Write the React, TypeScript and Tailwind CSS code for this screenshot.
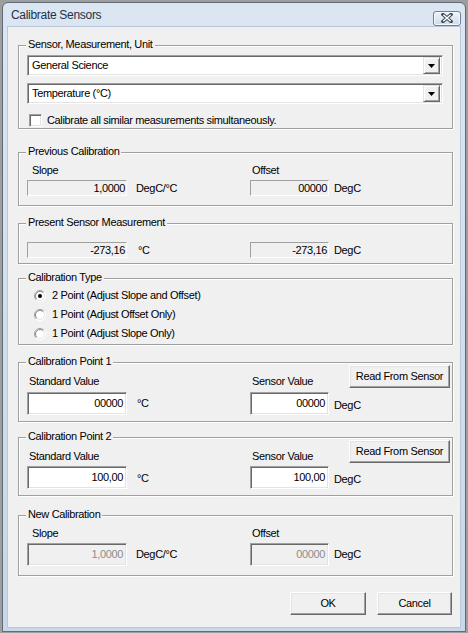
import React from "react";

const font = "font-['Liberation_Sans',Arial,sans-serif] text-[11px] leading-[13px] tracking-[-0.35px] text-black";

function Group({ title, className, children }: { title: string; className: string; children: React.ReactNode }) {
  return (
    <div className={`relative box-border w-[435px] border border-[#a0a0a0] shadow-[inset_1px_1px_0_#fff,1px_1px_0_#fff] ${className}`}>
      <span className="absolute left-[7px] top-[-8px] bg-[#f0f0f0] px-[2px] leading-[13px]">{title}</span>
      {children}
    </div>
  );
}

// classic sunken 2px edge
function Edit({ value, w, disabled }: { value: string; w: string; disabled?: boolean }) {
  return (
    <div
      className={`box-border h-[23px] ${w} flex items-center justify-end border border-t-[#a0a0a0] border-l-[#a0a0a0] border-b-white border-r-white shadow-[inset_1px_1px_0_#696969,inset_-1px_-1px_0_#e3e3e3] pr-[3px] ${
        disabled ? "bg-[#f0f0f0] text-[#8d8d8d]" : "bg-white"
      }`}
    >
      {value}
    </div>
  );
}

// static edge read-only field
function Static({ value, w }: { value: string; w: string }) {
  return (
    <div className={`box-border h-[16px] ${w} flex items-center justify-end border border-t-[#a0a0a0] border-l-[#a0a0a0] border-b-white border-r-white pr-[1px]`}>
      {value}
    </div>
  );
}

function Button({ label, className }: { label: string; className: string }) {
  return (
    <div
      className={`box-border h-[23px] flex items-center justify-center border border-t-white border-l-white border-b-[#696969] border-r-[#696969] shadow-[inset_-1px_-1px_0_#a0a0a0,inset_1px_1px_0_#e3e3e3] bg-[#f0f0f0] ${className}`}
    >
      {label}
    </div>
  );
}

function Combo({ value }: { value: string }) {
  return (
    <div className="box-border ml-[8px] h-[21px] w-[416px] flex items-center border border-t-[#a0a0a0] border-l-[#a0a0a0] border-b-white border-r-white shadow-[inset_1px_1px_0_#696969,inset_-1px_-1px_0_#e3e3e3] bg-white pl-[4px] pr-[2px]">
      <span className="flex-1">{value}</span>
      <div className="box-border h-[17px] w-[17px] flex items-center justify-center border border-t-[#e3e3e3] border-l-[#e3e3e3] border-b-[#696969] border-r-[#696969] shadow-[inset_1px_1px_0_#fff,inset_-1px_-1px_0_#a0a0a0] bg-[#f0f0f0]">
        <svg width="7" height="4" viewBox="0 0 7 4">
          <path d="M0 0H7L3.5 4Z" fill="#000" />
        </svg>
      </div>
    </div>
  );
}

function Radio({ checked, label }: { checked?: boolean; label: string }) {
  return (
    <div className="flex h-[19px] items-center pl-[15px]">
      <svg width="12" height="12" viewBox="0 0 12 12">
        <circle cx="6" cy="6" r="5.5" fill="#fff" />
        <path d="M9.9 2.1A5.5 5.5 0 0 0 2.1 9.9" fill="none" stroke="#a0a0a0" strokeWidth="1" />
        <path d="M2.1 9.9A5.5 5.5 0 0 0 9.9 2.1" fill="none" stroke="#fff" strokeWidth="1" />
        <path d="M9.2 2.8A4.5 4.5 0 0 0 2.8 9.2" fill="none" stroke="#8a8a8a" strokeWidth="1" />
        <path d="M2.8 9.2A4.5 4.5 0 0 0 9.2 2.8" fill="none" stroke="#e3e3e3" strokeWidth="1" />
        {checked && <circle cx="6" cy="6" r="2" fill="#000" />}
      </svg>
      <span className="ml-[6px]">{label}</span>
    </div>
  );
}

export default function App() {
  return (
    <div className={`w-[468px] h-[633px] bg-[#9e9e9e] pt-[2px] px-[2px] ${font}`}>
      <div className="box-border h-[630px] rounded-t-[6px] border border-[#5f6b78] bg-gradient-to-b from-[#dbe6f2] to-[#c8d7e9] px-[5px] pb-[5px]">
        {/* title bar */}
        <div className="flex h-[24px] items-center">
          <span className="ml-[3px] mt-[1px] font-['Liberation_Sans',sans-serif] text-[12px] tracking-[-0.3px] text-[#1e3148]">
            Calibrate Sensors
          </span>
          <div className="ml-auto mr-[-1px] mt-[6px] flex h-[15px] w-[28px] items-center justify-center rounded-[3px] border border-[#6e7f95] bg-gradient-to-b from-[#eef3f9] to-[#cfdbe9] shadow-[inset_0_0_0_1px_#f5f8fc]">
            <svg width="12" height="10" viewBox="0 0 12 10">
              <path d="M2 1.5L10 8.5M10 1.5L2 8.5" stroke="#3c4856" strokeWidth="3.4" strokeLinecap="square" />
              <path d="M2.3 1.8L9.7 8.2M9.7 1.8L2.3 8.2" stroke="#fff" strokeWidth="1.5" />
            </svg>
          </div>
        </div>

        {/* client area */}
        <div className="box-border h-[600px] bg-[#f0f0f0] pl-[10px] shadow-[0_0_0_1px_#b9c8d9]">
          <div className="pt-[18px]" />
          <Group title="Sensor, Measurement, Unit" className="h-[84px] pt-[9px]">
            <Combo value="General Science" />
            <div className="h-[7px]" />
            <Combo value="Temperature (°C)" />
            <div className="mt-[10px] flex items-center pl-[10px]">
              <div className="box-border h-[13px] w-[13px] border border-t-[#a0a0a0] border-l-[#a0a0a0] border-b-white border-r-white shadow-[inset_1px_1px_0_#696969,inset_-1px_-1px_0_#e3e3e3] bg-white" />
              <span className="ml-[5px]">Calibrate all similar measurements simultaneously.</span>
            </div>
          </Group>

          <Group title="Previous Calibration" className="mt-[23px] h-[54px] pt-[11px] pl-[8px]">
            <div className="flex">
              <span className="w-[223px] pl-[5px]">Slope</span>
              <span className="pl-[2px]">Offset</span>
            </div>
            <div className="mt-[3px] flex items-center">
              <div className="flex w-[223px] items-center">
                <Static value="1,0000" w="w-[100px]" />
                <span className="ml-[9px]">DegC/°C</span>
              </div>
              <Static value="00000" w="w-[79px]" />
              <span className="ml-[5px]">DegC</span>
            </div>
          </Group>

          <Group title="Present Sensor Measurement" className="mt-[17px] h-[41px] pt-[18px] pl-[8px]">
            <div className="flex items-center">
              <div className="flex w-[223px] items-center">
                <Static value="-273,16" w="w-[100px]" />
                <span className="ml-[11px]">°C</span>
              </div>
              <Static value="-273,16" w="w-[79px]" />
              <span className="ml-[5px]">DegC</span>
            </div>
          </Group>

          <Group title="Calibration Type" className="mt-[14px] h-[67px] pt-[7px]">
            <Radio checked label="2 Point (Adjust Slope and Offset)" />
            <Radio label="1 Point (Adjust Offset Only)" />
            <Radio label="1 Point (Adjust Slope Only)" />
          </Group>

          <Group title="Calibration Point 1" className="mt-[17px] h-[60px] pt-[2px] pl-[8px]">
            <div className="flex h-[23px] items-end">
              <span className="w-[223px] pl-[2px]">Standard Value</span>
              <span className="w-[99px] pl-[2px]">Sensor Value</span>
              <Button label="Read From Sensor" className="w-[101px] self-start" />
            </div>
            <div className="mt-[4px] flex items-center">
              <div className="flex w-[223px] items-center">
                <Edit value="00000" w="w-[100px]" />
                <span className="ml-[10px]">°C</span>
              </div>
              <Edit value="00000" w="w-[79px]" />
              <span className="ml-[5px] mt-[3px]">DegC</span>
            </div>
          </Group>

          <Group title="Calibration Point 2" className="mt-[15px] h-[59px] pt-[2px] pl-[8px]">
            <div className="flex h-[23px] items-end">
              <span className="w-[223px] pl-[2px]">Standard Value</span>
              <span className="w-[99px] pl-[2px]">Sensor Value</span>
              <Button label="Read From Sensor" className="w-[101px] self-start" />
            </div>
            <div className="mt-[3px] flex items-center">
              <div className="flex w-[223px] items-center">
                <Edit value="100,00" w="w-[100px]" />
                <span className="ml-[10px] mt-[2px]">°C</span>
              </div>
              <Edit value="100,00" w="w-[79px]" />
              <span className="ml-[5px] mt-[3px]">DegC</span>
            </div>
          </Group>

          <Group title="New Calibration" className="mt-[19px] h-[61px] pt-[11px] pl-[8px]">
            <div className="flex">
              <span className="w-[223px] pl-[5px]">Slope</span>
              <span className="pl-[2px]">Offset</span>
            </div>
            <div className="mt-[3px] flex items-center">
              <div className="flex w-[223px] items-center">
                <Edit value="1,0000" w="w-[100px]" disabled />
                <span className="ml-[9px]">DegC/°C</span>
              </div>
              <Edit value="00000" w="w-[79px]" disabled />
              <span className="ml-[5px]">DegC</span>
            </div>
          </Group>

          <div className="mt-[16px] flex w-[434px] justify-end gap-[11px]">
            <Button label="OK" className="w-[76px]" />
            <Button label="Cancel" className="w-[75px]" />
          </div>
        </div>
      </div>
    </div>
  );
}
